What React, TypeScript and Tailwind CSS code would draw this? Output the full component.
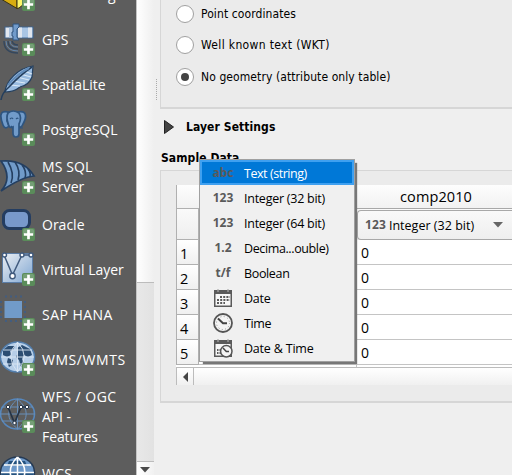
import React from 'react';

const ui = "font-['Open_Sans','Noto_Sans',sans-serif]";

function Plus() {
  return (
    <g>
      <rect x="22" y="21" width="13" height="13" rx="2" fill="#5a8c5a" />
      <rect x="23" y="22" width="11" height="5" rx="1.5" fill="#76a077" />
      <path d="M28.5 22.800v9.400M23.800 27.500h9.400" stroke="#fff" strokeWidth="2.7" />
    </g>
  );
}

function PackageIcon() {
  return (
    <g stroke="#3b3310" strokeWidth="1">
      <path d="M1 16L17 22V31.500L1 22Z" fill="#d9ad10" />
      <path d="M17 18L24 14V27L19 31L17 31.500Z" fill="#fcf56a" />
    </g>
  );
}

function GpsIcon() {
  return (
    <g>
      <rect x="5" y="5" width="8" height="11" fill="#e3e8f0" stroke="#41648e" />
      <rect x="9" y="5.500" width="4" height="10" fill="#a9c2df" />
      <rect x="17" y="5" width="16" height="11" fill="#a9c5e4" stroke="#41648e" />
      <path d="M20 5.500V15.500M30 5.500V15.500" stroke="#dfe5ee" strokeWidth="4" />
      <path d="M13 2h6v3l-2 2v8l2 3h-6v-4h-1v-4h1Z" fill="#719bcb" stroke="#31547f" />
      <path d="M4 19q0 12 14 12M8 19q0 8 10 8M12 19q1 4 6 4" fill="none" stroke="#34475e" strokeWidth="1.400" />
      <path d="M6 19q0 10 12 10M10 19q0 6 8 6" fill="none" stroke="#6285ac" strokeWidth="1" />
    </g>
  );
}

function FeatherIcon() {
  return (
    <g>
      <path d="M5 25C6 14 18 1 33 -1L32 10Q29 18 20 20Q14 25 5 25Z" fill="#9abce0" stroke="#243f5e" strokeWidth="1.200" />
      <path d="M10 18l10 1M13 14l12 2M17 10l12 3M20 7l11 3M24 4l8 3" stroke="#dae8f5" strokeWidth="1.200" />
      <path d="M1 33Q2 26 9 20Q20 8 32 0" fill="none" stroke="#243f5e" strokeWidth="1.600" />
      <path d="M8 18Q17 7 29 1" fill="none" stroke="#618bb9" strokeWidth="2" />
    </g>
  );
}

function ElephantIcon() {
  return (
    <g fill="#719bc9" stroke="#2e5580" strokeWidth="1.700">
      <path d="M8 0C-1 -2 0 5 3 13Q5 18 9 14L7 9Z" />
      <path d="M18 0C27 -2 27 5 23 12Q21 17 18 14Z" />
      <path d="M8 1Q13 -3 19 1Q22 6 19 12L19 22Q19 25 16 25Q13 25 13 21V15Q9 17 8 11Q6 5 8 1Z" />
      <path d="M10 7q2-2 3 0M16 7q2-2 2 0M11 14l2 2M19 16h4" fill="none" strokeWidth="1.200" />
    </g>
  );
}

function SqlServerIcon() {
  return (
    <g>
      <path d="M1 1Q24 -1 34 16Q22 17 1 31Q13 18 1 1Z" fill="#719bc9" stroke="#243f61" strokeWidth="1.700" />
      <path d="M8 2Q15 14 11 23M15 2Q21 11 18 20M22 5Q27 11 25 18M28 9Q31 13 30 16" fill="none" stroke="#243f61" strokeWidth="1.600" />
    </g>
  );
}

function OracleIcon() {
  return <rect x="3.500" y="3.500" width="26" height="18" rx="6" fill="#7899cb" stroke="#243d61" strokeWidth="3" />;
}

function VirtualLayerIcon() {
  return (
    <g>
      <defs>
        <linearGradient id="sheet" x2="1" y2="1">
          <stop stopColor="#eceff3" />
          <stop offset="1" stopColor="#7fa6d2" />
        </linearGradient>
      </defs>
      <rect x="2.500" y="1.500" width="30" height="29" fill="url(#sheet)" stroke="#5b7da6" />
      <path d="M4 3L12.500 23L22 3H31" fill="none" stroke="#405a7d" strokeWidth="1.500" />
      <g fill="#fff" stroke="#405a7d" strokeWidth="1.400">
        <circle cx="4.500" cy="3" r="2" />
        <circle cx="12.500" cy="24" r="2.700" />
        <circle cx="22" cy="3" r="2" />
        <circle cx="31" cy="3" r="2" />
      </g>
    </g>
  );
}

function ChipIcon() {
  return (
    <g>
      <path d="M5 -.5H22M5 24H22M1 4V21M25 4V21" fill="none" stroke="#425d80" strokeWidth="2" strokeDasharray="2 3" />
      <rect x="4.500" y="4" width="17.500" height="17" fill="#719bc9" />
    </g>
  );
}

function MapGlobeIcon() {
  return (
    <g>
      <ellipse cx="17.500" cy="15" rx="17" ry="15" fill="#b6cee8" stroke="#537fae" strokeWidth="1.500" />
      <path d="M3 8l5-4 7 0-2 4-3 1 1 4-4 2-4-2ZM8 16l5 2-1 5-3 2-2-5ZM17 6l5-3 8 4 2 6-4 2-4-2-2 4 2 5-3 3-2-7-3-3 2-4Z" fill="#2b4d72" />
      <path d="M3 8H32M1 15H34M3 22H32M17.500 0V30M17.500 0Q4 14 17.500 30M17.500 0Q31 14 17.500 30" fill="none" stroke="#dae7f4" strokeWidth=".9" />
    </g>
  );
}

function VectorGlobeIcon() {
  return (
    <g>
      <g fill="none" stroke="#698fb9" strokeWidth="1">
        <ellipse cx="17.500" cy="15" rx="17" ry="15" strokeWidth="1.600" stroke="#5687bd" />
        <path d="M17.500 0V30M2 8H33M0 15H35M2 22H33M17.500 0Q0 15 17.500 30M17.500 0Q35 15 17.500 30" />
      </g>
      <path d="M8 8L14.500 24L21 8H27" fill="none" stroke="#243346" strokeWidth="1.700" />
      <g fill="#fff" stroke="#243346">
        <circle cx="8" cy="8" r="1.700" />
        <circle cx="14.500" cy="24" r="1.700" />
        <circle cx="21" cy="8" r="1.700" />
        <circle cx="27" cy="8" r="1.700" />
      </g>
    </g>
  );
}

function CoverageGlobeIcon() {
  return (
    <g>
      <ellipse cx="17.500" cy="16.500" rx="17" ry="15.500" fill="#6d98c8" stroke="#263a54" strokeWidth="1.500" />
      <path d="M9 5h16l2 5H7ZM1 17h33l-2 8H3Z" fill="#24527f" />
      <path d="M4 9H31M1 16.500H34M17.500 1V32M17.500 1Q3 15 17.500 32M17.500 1Q32 15 17.500 32" fill="none" stroke="#fff" strokeWidth="1.500" />
    </g>
  );
}

const sources = [
  { label: ['GeoPackage'], icon: PackageIcon, box: 'h-[45px]', text: 'tracking-[0.2px]' },
  { label: ['GPS'], icon: GpsIcon, box: 'h-[45px]', text: 'tracking-[0.1px]' },
  { label: ['SpatiaLite'], icon: FeatherIcon, box: 'h-[45px]', text: 'tracking-[-0.05px]' },
  { label: ['PostgreSQL'], icon: ElephantIcon, box: 'h-[45px]', text: 'tracking-normal' },
  { label: ['MS SQL', 'Server'], icon: SqlServerIcon, box: 'h-[50px]', text: 'tracking-[0.1px]' },
  { label: ['Oracle'], icon: OracleIcon, box: 'h-[45px]', text: 'tracking-normal' },
  { label: ['Virtual Layer'], icon: VirtualLayerIcon, box: 'h-[45px]', text: 'tracking-normal' },
  { label: ['SAP HANA'], icon: ChipIcon, box: 'h-[45px]', text: 'tracking-[0.45px]' },
  { label: ['WMS/WMTS'], icon: MapGlobeIcon, box: 'h-[45px]', text: 'tracking-[0.55px]' },
  { label: ['WFS / OGC', 'API -', 'Features'], icon: VectorGlobeIcon, box: 'h-[69px]', text: 'tracking-[-0.1px] first-line:tracking-[0.5px]' },
  { label: ['WCS'], icon: CoverageGlobeIcon, box: 'h-[45px]', text: 'tracking-[0.3px]' },
];

function Sidebar() {
  return (
    <nav className={`flex h-full w-[136px] shrink-0 flex-col overflow-hidden bg-[#5d5d5d] text-[14px] leading-5 text-white ${ui}`}>
      <div className="-mt-[28px] flex flex-col">
        {sources.map(({ label, icon: Icon, box, text }) => (
          <div key={label[0]} className={`flex shrink-0 items-center gap-[7px] ${box}`}>
            <svg width="35" height="35" className="shrink-0 overflow-visible">
              <Icon />
              <Plus />
            </svg>
            <div className={`whitespace-pre ${text}`}>{label.join('\n')}</div>
          </div>
        ))}
      </div>
    </nav>
  );
}

function SidebarScroll() {
  return (
    <div className="flex h-full w-[18px] shrink-0 flex-col border-l border-[#c4c4c4]">
      <div className="h-[282px] bg-linear-to-r from-white to-[#efefef]" />
      <div className="h-[180px] border-y border-[#bcbcbc] bg-linear-to-r from-[#e8e8e8] to-[#e2e2e2]" />
      <div className="flex flex-1 justify-center bg-linear-to-r from-white to-[#f1f1f1] pt-[5px]">
        <svg width="10" height="6" className="mr-0.5">
          <path d="M0 0h10L5 5.500Z" fill="#4a4a4a" />
        </svg>
      </div>
    </div>
  );
}

function Radio({ label, checked, box }: { label: string; checked?: boolean; box: string }) {
  return (
    <div className={`flex items-center gap-[7px] ${box}`}>
      <div className="flex size-[18px] shrink-0 items-center justify-center rounded-full border border-[#a0a0a0] bg-white">
        {checked && <div className="size-2 rounded-full bg-[#444]" />}
      </div>
      <span className="whitespace-nowrap">{label}</span>
    </div>
  );
}

function CalendarIcon() {
  return (
    <svg width="18" height="18">
      <path d="M.75 2.500h16.500v14.750H.75Z" fill="#f7f7f7" stroke="#5a5a5a" strokeWidth="1.500" />
      <path d="M0 1h18v4H0Z" fill="#5a5a5a" />
      <path d="M4 0v3M14 0v3" stroke="#aaa" strokeWidth="1.200" />
      <path d="M6 8h10M3 11h13M3 14h8" stroke="#5a5a5a" strokeWidth="2" strokeDasharray="2 1.200" />
    </svg>
  );
}

function ClockIcon() {
  return (
    <svg width="20" height="20">
      <circle cx="10" cy="10" r="9" fill="#f4f4f4" stroke="#555" strokeWidth="1.800" />
      <circle cx="10" cy="10" r="6.500" fill="none" stroke="#999" strokeWidth="1" strokeDasharray="1 2.400" />
      <path d="M5 5.500L10 10.300H14" fill="none" stroke="#444" strokeWidth="1.900" />
    </svg>
  );
}

function CalendarClockIcon() {
  return (
    <svg width="18" height="18" className="overflow-visible">
      <path d="M.75 2.500h16.500v14.750H.75Z" fill="#f7f7f7" stroke="#5a5a5a" strokeWidth="1.500" />
      <path d="M0 1h18v4H0Z" fill="#5a5a5a" />
      <path d="M4 0v3M14 0v3" stroke="#aaa" strokeWidth="1.200" />
      <path d="M3 11h4M3 14h4" stroke="#5a5a5a" strokeWidth="2" strokeDasharray="1.500 1" />
      <circle cx="12.300" cy="12.300" r="5.700" fill="#f4f4f4" stroke="#555" strokeWidth="1.500" />
      <path d="M9 9l3.300 3.500H15" fill="none" stroke="#444" strokeWidth="1.500" />
    </svg>
  );
}

function Glyph({ children }: { children: string }) {
  return <span className="font-['Noto_Sans',sans-serif] text-[12px] font-bold text-[#5a5a5a]">{children}</span>;
}

const types = [
  { label: 'Text (string)', icon: <Glyph>abc</Glyph>, text: 'tracking-[-0.45px]' },
  { label: 'Integer (32 bit)', icon: <Glyph>123</Glyph>, text: 'tracking-[-0.25px]' },
  { label: 'Integer (64 bit)', icon: <Glyph>123</Glyph>, text: 'tracking-[-0.25px]' },
  { label: 'Decima...ouble)', icon: <Glyph>1.2</Glyph>, text: 'tracking-[-0.38px]' },
  { label: 'Boolean', icon: <Glyph>t/f</Glyph>, text: 'tracking-[-0.35px]' },
  { label: 'Date', icon: <CalendarIcon />, text: 'tracking-[-0.25px]' },
  { label: 'Time', icon: <ClockIcon />, text: 'tracking-[-0.35px]' },
  { label: 'Date & Time', icon: <CalendarClockIcon />, text: 'tracking-[-0.2px]' },
];

function TypeMenu() {
  return (
    <div className={`absolute left-[199px] top-[159px] h-[203px] w-[156px] border border-[#a0a0a0] bg-[#f0f0f0] text-[12.5px] text-black shadow-[3px_3px_1px_-1px_#777] ${ui}`}>
      {types.map(({ label, icon, text }, i) => (
        <div
          key={label}
          className={`flex h-[25px] items-center ${i === 0 ? 'border-2 border-[#3fa0f0] bg-[#0078d7] pl-[10px] text-white' : 'pl-3'}`}
        >
          <div className="flex w-[22px] shrink-0 justify-center">{icon}</div>
          <span className={`ml-[10px] mt-[3px] whitespace-nowrap leading-[18px] ${text}`}>{label}</span>
        </div>
      ))}
    </div>
  );
}

function SampleTable() {
  return (
    <div className={`flex flex-col text-[15px] text-black ${ui}`}>
      <div className="flex h-6 bg-linear-to-b from-[#fdfdfd] to-[#f1f1f1]">
        <div className="w-[181px] shrink-0 border-b border-l border-[#b0b0b0]" />
        <div className="flex flex-1 items-center justify-center border-b border-[#a8a8a8] text-[14.5px]">
          <span className="ml-[3px] mt-px">comp2010</span>
        </div>
      </div>
      <div className="flex h-[31px] bg-linear-to-b from-[#fafafa] to-[#eee]">
        <div className="w-[23px] border-x border-b border-[#b0b0b0]" />
        <div className="w-[158px] border-r border-[#c4c4c4]" />
        <div className="mt-px flex flex-1 items-center rounded-l border border-r-0 border-[#a8a8a8] pl-[7px]">
          <Glyph>123</Glyph>
          <span className="ml-[3px] mt-0.5 whitespace-nowrap text-[12.5px] tracking-[0.02px]">Integer (32 bit)</span>
          <svg width="10" height="6" className="ml-[19px]">
            <path d="M0 0h10L5 5.500Z" fill="#666" />
          </svg>
        </div>
      </div>
      {[1, 2, 3, 4, 5].map((n) => (
        <div key={n} className="flex h-[25px] bg-white">
          <div className="w-[23px] border-x border-b border-[#b0b0b0] bg-linear-to-b from-white to-[#f0f0f0] pl-[3px] text-[14.5px] leading-[28px]">
            {n}
          </div>
          <div className="w-[158px] border-b border-r border-[#c4c4c4]" />
          <div className="flex-1 border-b border-[#c4c4c4] pl-1 text-[14px] leading-[26px]">0</div>
        </div>
      ))}
      <div className="flex h-[3px] border-b border-[#bcbcbc] bg-white">
        <div className="w-[181px] border-r border-[#c4c4c4]" />
      </div>
      <div className="flex h-[17px] border-l border-[#bcbcbc] bg-linear-to-b from-white to-[#f0f0f0]">
        <div className="flex w-[17px] items-center justify-center border-r border-[#bcbcbc]">
          <svg width="5" height="10">
            <path d="M5 0v10L0 5Z" fill="#444" />
          </svg>
        </div>
      </div>
    </div>
  );
}

export default function App() {
  return (
    <div className="relative flex h-[475px] w-[512px] overflow-hidden bg-[#efefef]">
      <Sidebar />
      <SidebarScroll />
      <div className="w-[6px] shrink-0 pl-[2px] pt-[79px]">
        <div className="h-[21px] border-l border-dotted border-[#aaa]" />
      </div>
      <main className="flex min-w-0 flex-1 flex-col font-['DejaVu_Sans_Condensed','DejaVu_Sans',sans-serif] text-[12px] tracking-[0.09px] text-black">
        <section className="h-[109px] border-b-2 border-l border-[#d6d6d6] bg-[#ebebeb] pl-[15px]">
          <Radio label="Point coordinates" box="h-[28px]" />
          <Radio label="Well known text (WKT)" box="h-[34px] tracking-[0.35px]" />
          <Radio label="No geometry (attribute only table)" checked box="h-[29px]" />
        </section>
        <div className="flex h-[36px] items-center pl-1 font-bold">
          <svg width="10" height="14">
            <path d="M.5.5L9.500 7L.5 13.500Z" fill="#444" stroke="#222" />
          </svg>
          <span className="ml-3 whitespace-nowrap">Layer Settings</span>
        </div>
        <div className="h-[25px] whitespace-nowrap pl-px pt-1 font-bold leading-[18px]">Sample Data</div>
        <section className="h-[233px] border-b-2 border-l border-t border-[#d6d6d6] bg-[#ebebeb] pl-[15px] pt-[14px]">
          <SampleTable />
        </section>
      </main>
      <TypeMenu />
    </div>
  );
}
